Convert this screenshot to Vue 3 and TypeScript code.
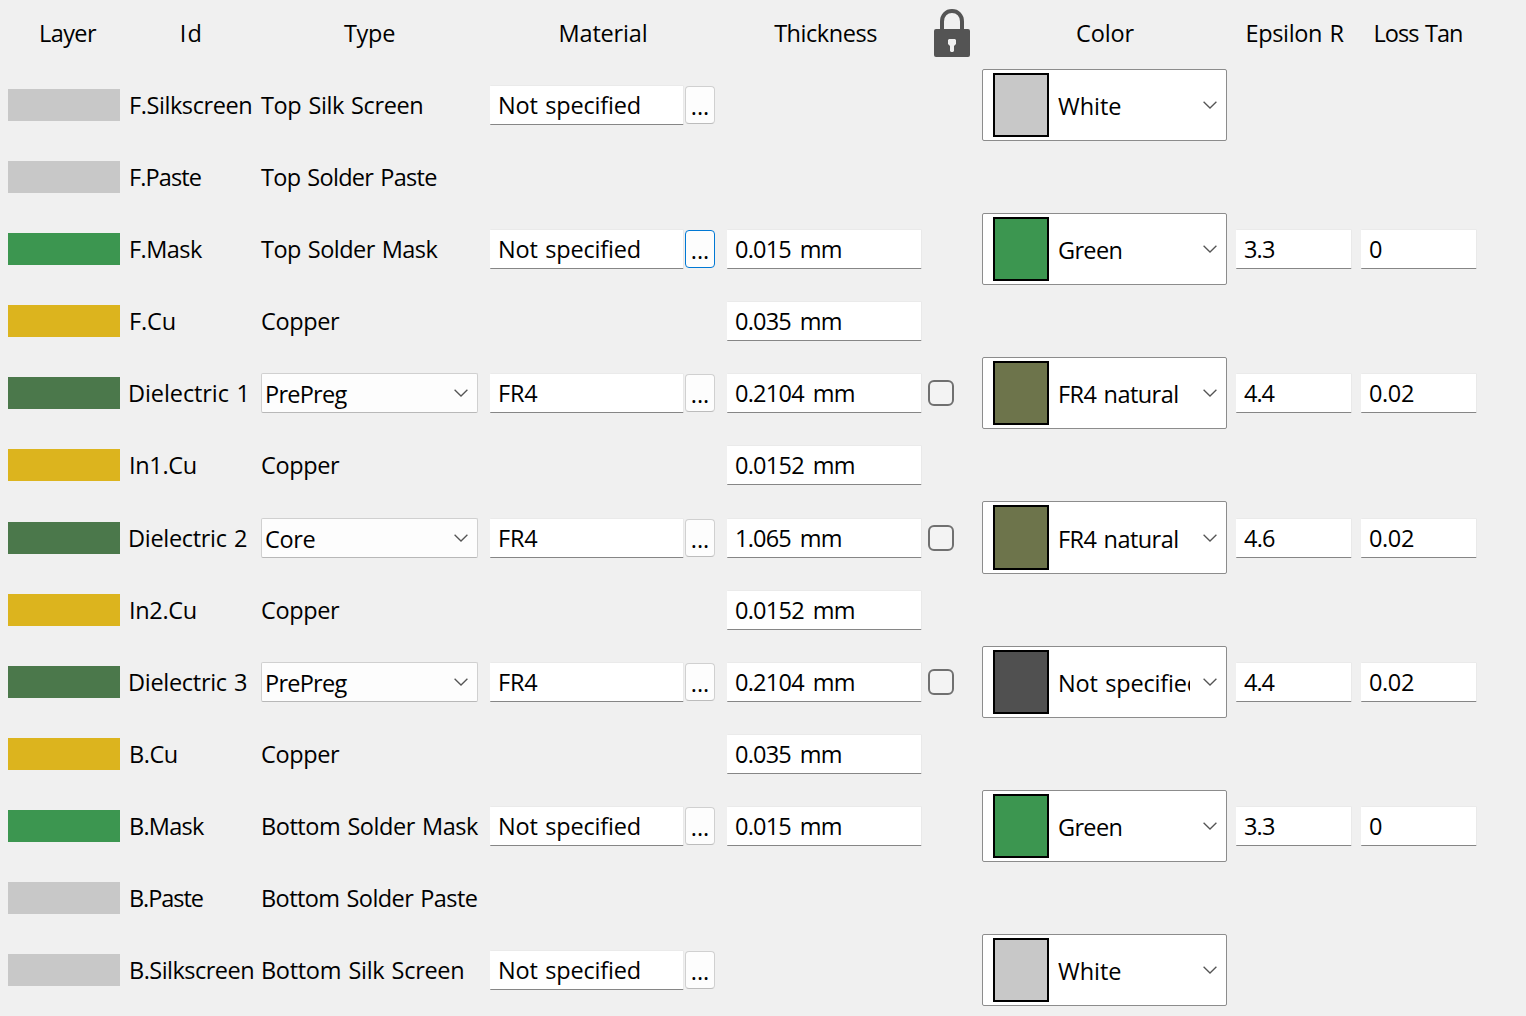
<script setup lang="ts">
interface StackRow {
  id: string
  swatch: string
  type: string
  typeSelect?: boolean
  material?: string
  focused?: boolean
  thickness?: string
  lock?: boolean
  color?: string
  fill?: string
  epsilon?: string
  loss?: string
}

const SILK = '#c8c8c8'
const MASK = '#3c9650'
const COPPER = '#dcb41e'
const CORE = '#4b784b'
const FR4 = '#6d744b'
const UNSET = '#505050'

const rows: StackRow[] = [
  { id: 'F.Silkscreen', swatch: SILK, type: 'Top Silk Screen', material: 'Not specified', color: 'White', fill: SILK },
  { id: 'F.Paste', swatch: SILK, type: 'Top Solder Paste' },
  { id: 'F.Mask', swatch: MASK, type: 'Top Solder Mask', material: 'Not specified', focused: true, thickness: '0.015 mm', color: 'Green', fill: MASK, epsilon: '3.3', loss: '0' },
  { id: 'F.Cu', swatch: COPPER, type: 'Copper', thickness: '0.035 mm' },
  { id: 'Dielectric 1', swatch: CORE, type: 'PrePreg', typeSelect: true, material: 'FR4', thickness: '0.2104 mm', lock: true, color: 'FR4 natural', fill: FR4, epsilon: '4.4', loss: '0.02' },
  { id: 'In1.Cu', swatch: COPPER, type: 'Copper', thickness: '0.0152 mm' },
  { id: 'Dielectric 2', swatch: CORE, type: 'Core', typeSelect: true, material: 'FR4', thickness: '1.065 mm', lock: true, color: 'FR4 natural', fill: FR4, epsilon: '4.6', loss: '0.02' },
  { id: 'In2.Cu', swatch: COPPER, type: 'Copper', thickness: '0.0152 mm' },
  { id: 'Dielectric 3', swatch: CORE, type: 'PrePreg', typeSelect: true, material: 'FR4', thickness: '0.2104 mm', lock: true, color: 'Not specified', fill: UNSET, epsilon: '4.4', loss: '0.02' },
  { id: 'B.Cu', swatch: COPPER, type: 'Copper', thickness: '0.035 mm' },
  { id: 'B.Mask', swatch: MASK, type: 'Bottom Solder Mask', material: 'Not specified', thickness: '0.015 mm', color: 'Green', fill: MASK, epsilon: '3.3', loss: '0' },
  { id: 'B.Paste', swatch: SILK, type: 'Bottom Solder Paste' },
  { id: 'B.Silkscreen', swatch: SILK, type: 'Bottom Silk Screen', material: 'Not specified', color: 'White', fill: SILK },
]

// Visible width of each label in pixels; tracking is derived from it.
const widths: Record<string, number> = {
  Layer: 55, Id: 18, Type: 50, Material: 85, Thickness: 102, Color: 56.5, 'Epsilon R': 96, 'Loss Tan': 86,
  'F.Silkscreen': 119.5, 'F.Paste': 69.5, 'F.Mask': 71, 'F.Cu': 43,
  'Dielectric 1': 114.5, 'Dielectric 2': 116, 'Dielectric 3': 116,
  'In1.Cu': 64, 'In2.Cu': 64, 'B.Cu': 45, 'B.Mask': 73, 'B.Paste': 71.5, 'B.Silkscreen': 121.5,
  'Top Silk Screen': 160.5, 'Top Solder Paste': 175, 'Top Solder Mask': 176.5, Copper: 77,
  'Bottom Solder Mask': 215, 'Bottom Solder Paste': 213.5, 'Bottom Silk Screen': 199.5,
  PrePreg: 79.5, Core: 48, 'Not specified': 139, FR4: 37,
  '0.015 mm': 104.5, '0.035 mm': 104.5, '0.2104 mm': 117.5, '1.065 mm': 103.5, '0.0152 mm': 117.5,
  White: 62, Green: 61.5, 'FR4 natural': 117, '3.3': 29, '4.4': 30, '4.6': 30, '0.02': 43,
}

// Measure at ten times the drawn size for sub-pixel precision.
const ctx = document.createElement('canvas').getContext('2d')!
ctx.font = '235px "Open Sans"'

function track(text: string): { letterSpacing: string; wordSpacing: string } | undefined {
  const target = widths[text]
  if (!target) return undefined
  const m = ctx.measureText(text)
  const ink = (m.actualBoundingBoxRight + m.actualBoundingBoxLeft) / 10
  const word = text.endsWith(' mm') ? 3.5 : 1.5
  const gaps = text.split(' ').length - 1
  return {
    letterSpacing: ((target - ink - word * gaps) / (text.length - 1)).toFixed(3) + 'px',
    wordSpacing: word + 'px',
  }
}
</script>

<template>
  <main class="stackup">
    <header class="grid head">
      <span :style="track('Layer')">Layer</span>
      <span class="h-id" :style="track('Id')">Id</span>
      <span :style="track('Type')">Type</span>
      <span :style="track('Material')">Material</span>
      <span class="h-thick" :style="track('Thickness')">Thickness</span>
      <span class="h-lock">
        <svg width="36" height="48" viewBox="0 0 36 48">
          <path d="M8 22V12.5C8 6 12.3 2 18 2s10 4 10 10.500V22" fill="none" stroke="#545454" stroke-width="4" />
          <rect y="20" width="36" height="28" rx="2" fill="#545454" />
          <path d="M15 30h6l1 1v4l-2 2v5l-1 1h-2l-1-1v-5l-2-2v-4z" fill="#f0f0f0" />
        </svg>
      </span>
      <span :style="track('Color')">Color</span>
      <span :style="track('Epsilon R')">Epsilon R</span>
      <span :style="track('Loss Tan')">Loss Tan</span>
    </header>

    <section v-for="(r, i) in rows" :key="r.id" class="grid row" :class="{ shifted: i === 6 }">
      <div class="bar" :style="{ background: r.swatch }"></div>
      <div class="id" :class="{ dielectric: r.typeSelect }" :style="track(r.id)">{{ r.id }}</div>
      <div v-if="r.typeSelect" class="select">
        <span class="select-text" :style="track(r.type)">{{ r.type }}</span>
        <svg class="chev" width="14" height="8" viewBox="0 0 14 8"><path d="M.6.7 7 7 13.400.7" /></svg>
      </div>
      <div v-else class="type" :style="track(r.type)">{{ r.type }}</div>
      <div class="material">
        <template v-if="r.material">
          <div class="field"><span :style="track(r.material)">{{ r.material }}</span></div>
          <button class="more" :class="{ focused: r.focused }">...</button>
        </template>
      </div>
      <div class="cell"><div v-if="r.thickness" class="field"><span :style="track(r.thickness)">{{ r.thickness }}</span></div></div>
      <div class="cell"><span v-if="r.lock" class="check"></span></div>
      <div class="cell">
        <div v-if="r.color" class="color">
          <span class="fill" :style="{ background: r.fill }"></span>
          <span class="color-text" :style="track(r.color)">{{ r.color }}</span>
          <svg class="chev" width="14" height="8" viewBox="0 0 14 8"><path d="M.6.7 7 7 13.400.7" /></svg>
        </div>
      </div>
      <div class="cell"><div v-if="r.epsilon" class="field"><span :style="track(r.epsilon)">{{ r.epsilon }}</span></div></div>
      <div class="cell"><div v-if="r.loss" class="field"><span :style="track(r.loss)">{{ r.loss }}</span></div></div>
    </section>
  </main>
</template>

<style>
body {
  background: #f0f0f0;
}
</style>

<style scoped>
.stackup {
  box-sizing: border-box;
  width: 1526px;
  height: 1016px;
  overflow: hidden;
  padding-left: 8px;
  background: #f0f0f0;
  color: #000;
  font-family: "Open Sans", "Noto Sans", sans-serif;
  font-size: 23.5px;
  white-space: pre;
  font-kerning: normal;
}
.grid {
  display: grid;
  grid-template-columns: 121px 132px 229px 237px 201px 54px 254px 125px 116px;
}
.head {
  height: 69px;
  line-height: 66px;
}
.head > span {
  text-align: center;
  padding-right: 2px;
}
.head > .h-id {
  padding-right: 7px;
}
.head > span:nth-child(3) {
  padding-right: 12px;
}
.head > span:nth-child(4) {
  padding-right: 11px;
}
.head > .h-thick {
  padding-right: 4px;
}
.head > .h-lock {
  display: flex;
  padding: 9px 0 0 6px;
}
.head > span:nth-child(7) {
  padding-right: 8px;
}
.head > span:nth-child(8) {
  padding-right: 8px;
}
.row {
  height: 72px;
  align-items: center;
  line-height: 72px;
}
.shifted {
  margin-top: 1px;
}
.bar {
  width: 112px;
  height: 32px;
}
.dielectric {
  margin-left: -1px;
}
.cell,
.material {
  display: flex;
  align-items: center;
  height: 72px;
}
.field {
  box-sizing: border-box;
  flex: 1;
  height: 40px;
  padding-left: 8px;
  border-top: 1px solid #eaeaea;
  border-right: 1px solid #e9e9e9;
  border-bottom: 1px solid #868686;
  border-radius: 1px;
  background: #fff;
  line-height: 38px;
}
.cell:nth-child(5) .field {
  flex: 0 0 195px;
}
.cell:nth-child(8) .field,
.cell:nth-child(9) .field {
  flex: 0 0 116px;
}
.material {
  width: 225px;
}
.more {
  box-sizing: border-box;
  width: 30px;
  height: 38px;
  margin-left: 1px;
  padding: 0;
  border: 1px solid #d0d0d0;
  border-bottom-color: #bcbcbc;
  border-radius: 4px;
  background: #fdfdfd;
  color: #000;
  font: inherit;
  line-height: 38px;
  text-align: center;
}
.more.focused {
  border-color: #0078d4;
}
.select {
  box-sizing: border-box;
  display: flex;
  align-items: center;
  width: 217px;
  height: 40px;
  padding: 0 9px 0 3px;
  border: 1px solid #d0d0d0;
  border-bottom-color: #b8b8b8;
  border-radius: 2px;
  background: #fdfdfd;
  line-height: 40px;
}
.select-text {
  flex: 1;
  padding-top: 2px;
}
.chev {
  flex: none;
  fill: none;
  stroke: #555;
  stroke-width: 1.3;
}
.check {
  box-sizing: border-box;
  width: 26px;
  height: 26px;
  border: 2px solid #707070;
  border-radius: 6px;
  background: #f3f3f3;
}
.color {
  box-sizing: border-box;
  display: flex;
  align-items: center;
  width: 245px;
  height: 72px;
  padding: 0 9px 0 10px;
  border: 1px solid #8c8c8c;
  border-radius: 2px;
  background: #fff;
}
.fill {
  box-sizing: border-box;
  flex: none;
  width: 56px;
  height: 64px;
  border: 2px solid #000;
}
.shifted .color {
  flex: none;
  height: 73px;
  margin-top: -1px;
}
.shifted .fill {
  height: 65px;
}
.color-text {
  width: 132px;
  margin: 0 13px 0 9px;
  padding-top: 2px;
  overflow: hidden;
}
</style>
